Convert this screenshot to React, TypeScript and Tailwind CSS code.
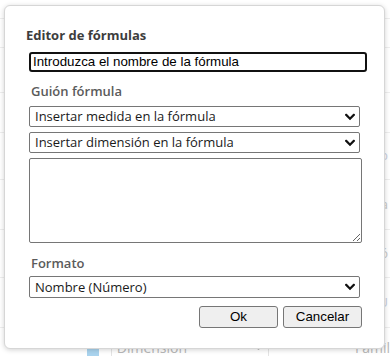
import { ChevronDown } from 'lucide-react';

function Select({ value, className = '' }: { value: string; className?: string }) {
  return (
    <div
      className={`relative flex h-[21px] w-[331px] items-center rounded-[2px] border border-[#767676] bg-white pl-[5px] font-['Open_Sans',sans-serif] text-[13px] text-[#1a1a1a] ${className}`}
    >
      <span className="leading-none">{value}</span>
      <svg
        className="absolute right-[4px] top-1/2 -translate-y-1/2"
        width="10"
        height="7"
        viewBox="0 0 10 7"
        fill="none"
      >
        <path d="M1.2 1.4 L5 5.2 L8.8 1.4" stroke="#111" strokeWidth="2.2" strokeLinecap="square" />
      </svg>
    </div>
  );
}

export default function App() {
  return (
    <div className="relative h-[356px] w-[390px] overflow-hidden bg-white">
      {/* page behind the modal */}
      <div className="flex flex-col font-['Open_Sans',sans-serif] text-[13px] text-[#c8c8c8]">
        <div className="h-[19px] border-b border-[#eeeeee]" />
        <div className="h-[29px] border-b border-[#eeeeee]" />
        <div className="h-[45px] border-b border-[#eeeeee]" />
        <div className="h-[40px] border-b border-[#eeeeee]" />
        <div className="flex h-[47px] items-center justify-end border-b border-[#eeeeee] pr-[2px] text-[#c9cfe0]">b</div>
        <div className="flex h-[50px] items-center justify-end border-b border-[#eeeeee] pr-[2px]">a</div>
        <div className="flex h-[48px] items-center justify-end border-b border-[#eeeeee] pr-[2px]">ó</div>
        <div className="flex h-[50px] items-center justify-end border-b border-[#eeeeee] pr-[2px] text-[#c9cfe0]">U</div>
        <div className="flex h-[28px] items-end">
          <div className="ml-[87px] h-[12px] w-[13px] bg-[#a9d3ee]" />
          <div className="ml-[12px] h-[20px] w-px bg-[#e4e4e4]" />
          <span className="ml-[5px] text-[14px] leading-[16px] text-[#b8b8b8]">Dimensión</span>
          <ChevronDown className="ml-[66px] mb-[2px] text-[#bbbbbb]" size={12} strokeWidth={3} />
          <div className="ml-[4px] h-[20px] w-px bg-[#e4e4e4]" />
          <span className="ml-[86px] text-[14px] leading-[16px] text-[#b8b8b8]">Famil</span>
        </div>
      </div>

      {/* modal */}
      <div className="absolute left-[4px] top-[5px] flex h-[344px] w-[381px] flex-col rounded-[6px] border border-[#d6d6d6] bg-white pl-[24px] pt-[20px] shadow-[0_1px_5px_rgba(0,0,0,0.18)]">
        <h2 className="-ml-[3px] font-['Open_Sans',sans-serif] text-[13px] font-bold leading-[18px] text-[#3d3d3d]">
          Editor de fórmulas
        </h2>

        <div className="mt-[8px] flex h-[20px] w-[338px] items-center rounded-[3px] border-2 border-[#111] pl-[2px] font-['Liberation_Sans',Arial,sans-serif] text-[13.33px] text-black">
          Introduzca el nombre de la fórmula
        </div>

        <div className="mt-[10px] pl-[2px] font-['Open_Sans',sans-serif] text-[13px] font-semibold leading-[18px] text-[#5b5b5b]">
          Guión fórmula
        </div>
        <Select value="Insertar medida en la fórmula" className="mt-[6px]" />
        <Select value="Insertar dimensión en la fórmula" className="mt-[5px]" />

        <textarea
          className="mt-[5px] h-[85px] w-[333px] rounded-[2px] border border-[#767676] bg-white outline-none"
          readOnly
        />

        <div className="mt-[11px] pl-[2px] font-['Open_Sans',sans-serif] text-[13px] font-semibold leading-[18px] text-[#5b5b5b]">
          Formato
        </div>
        <Select value="Nombre (Número)" className="mt-[4px] h-[22px]" />

        <div className="mt-[8px] flex w-[333px] justify-end gap-[5px] font-['Liberation_Sans',Arial,sans-serif] text-[13.33px] text-black">
          <button className="h-[22px] w-[79px] rounded-[3px] border border-[#767676] bg-[#efefef]">Ok</button>
          <button className="h-[22px] w-[79px] rounded-[3px] border border-[#767676] bg-[#efefef]">Cancelar</button>
        </div>
      </div>
    </div>
  );
}
